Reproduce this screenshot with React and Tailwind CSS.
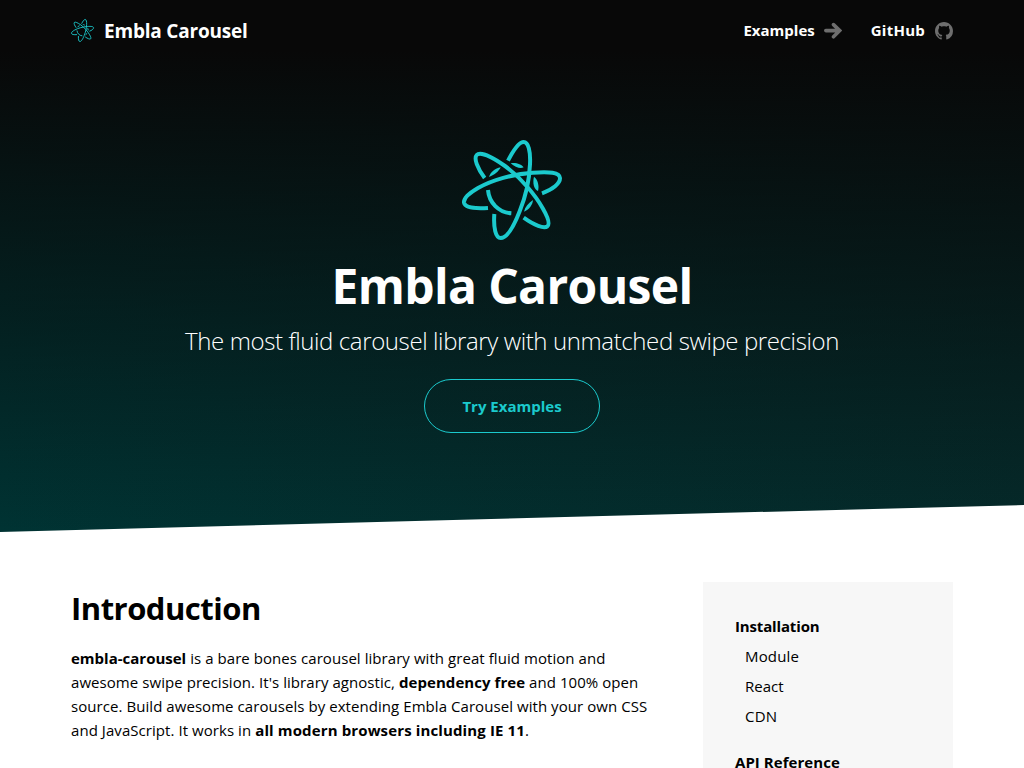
import React from "react";

function EmblaLogo({ className, stroke = 12 }) {
  return (
    <svg className={className} viewBox="30 30 300 300" fill="none" stroke="#1bcacd" strokeWidth={stroke} overflow="visible">
      <path d="M168 92C184 61 200 36 215 36C229 36 236 63 234 103C232 148 222 197 203 244C186 288 165 324 146 324C131 324 124 294 127 252" />
      <path d="M270 190C302 179 325 160 324 144C323 127 292 124 242 128C183 132 120 150 78 174C49 191 34 205 36 218C39 232 67 237 108 234" />
      <path d="M98 144C76 115 65 85 74 75C84 64 117 78 159 108C205 142 249 193 273 236C289 264 294 282 286 289C276 297 247 286 215 263" />
      <path d="M108 180C111 218 140 247 178 250" />
      <g fill="#1bcacd" stroke="none">
        <path d="M111 141C115 127 129 115 146 112C141 124 128 134 111 141Z" />
        <path d="M176 100C189 96 208 102 215 112C206 117 190 113 176 100Z" />
        <path d="M246 140C258 149 262 168 258 183C246 178 241 159 246 140Z" />
        <path d="M243 210C242 225 231 239 216 245C219 231 229 219 243 210Z" />
      </g>
    </svg>
  );
}

function Sidebar() {
  return (
    <aside className="w-[250px] bg-[#f7f7f7] px-8 pt-[29px] text-[15px] leading-[30px]">
      <h3 className="font-bold tracking-[-0.15px]">Installation</h3>
      <ul className="mb-4 pl-2.5">
        <li className="tracking-[0.15px]">Module</li>
        <li>React</li>
        <li className="tracking-[0.2px]">CDN</li>
      </ul>
      <h3 className="font-bold tracking-[0.05px]">API Reference</h3>
    </aside>
  );
}

export default function App() {
  return (
    <div className="flex h-screen flex-col overflow-hidden bg-white font-['Open_Sans','Noto_Sans',sans-serif] text-black">
      <section className="flex h-[532px] shrink-0 flex-col bg-[linear-gradient(#080808_50px,#08080800_532px),linear-gradient(90deg,#003333,#052a2a)] [clip-path:polygon(0_0,100%_0,100%_505px,0_532px)]">
        <header className="flex h-[61px] items-center justify-between px-[71px] text-white">
          <div className="flex items-center gap-2.5">
            <EmblaLogo className="h-[23px] w-[23px]" stroke={12} />
            <span className="pt-0.5 text-[19px] font-bold tracking-[-0.2px]">Embla Carousel</span>
          </div>
          <nav className="flex items-center gap-[29px] text-[15px] font-bold">
            <a className="flex items-center gap-[9px]">
              Examples
              <svg className="h-[18px] w-[18px]" viewBox="0 0 18 18" fill="none" stroke="#6e6e6e" strokeWidth="3.6" strokeLinecap="round">
                <path d="M1.8 8.6H15M9.5 2.6L15.7 8.6L9.5 14.8" />
              </svg>
            </a>
            <a className="flex items-center gap-2.5 tracking-[0.25px]">
              GitHub
              <svg className="h-[18px] w-[18px]" viewBox="0 0 16 16" fill="#6e6e6e">
                <path d="M8 0C3.58 0 0 3.58 0 8c0 3.54 2.29 6.53 5.47 7.59.4.07.55-.17.55-.38 0-.19-.01-.82-.01-1.49-2.01.37-2.53-.49-2.69-.94-.09-.23-.48-.94-.82-1.13-.28-.15-.68-.52-.01-.53.63-.01 1.08.58 1.23.82.72 1.21 1.87.87 2.33.66.07-.52.28-.87.51-1.07-1.78-.2-3.64-.89-3.64-3.95 0-.87.31-1.59.82-2.15-.08-.2-.36-1.02.08-2.12 0 0 .67-.21 2.2.82.64-.18 1.32-.27 2-.27s1.36.09 2 .27c1.53-1.04 2.2-.82 2.2-.82.44 1.1.16 1.92.08 2.12.51.56.82 1.27.82 2.15 0 3.07-1.87 3.75-3.65 3.95.29.25.54.73.54 1.48 0 1.07-.01 1.93-.01 2.2 0 .21.15.46.55.38A8.01 8.01 0 0 0 16 8c0-4.42-3.58-8-8-8Z" />
              </svg>
            </a>
          </nav>
        </header>
        <div className="flex flex-col items-center pt-[79px]">
          <EmblaLogo className="h-[100px] w-[100px]" />
          <h1 className="mt-[15px] text-[48px] leading-[62px] font-bold tracking-[-0.65px] whitespace-nowrap text-white">Embla Carousel</h1>
          <p className="mt-2 text-[24px] leading-[32px] font-light tracking-[-0.39px] whitespace-nowrap text-white">The most fluid carousel library with unmatched swipe precision</p>
          <a className="mt-[22px] flex h-[54px] w-[176px] items-center justify-center rounded-full border border-[#1bcacd] text-[15px] font-bold text-[#1bcacd]">Try Examples</a>
        </div>
      </section>
      <main className="mt-[50px] flex flex-1 justify-between px-[71px]">
        <article>
          <h2 className="text-[31px] leading-[52px] font-bold tracking-[-0.5px]">Introduction</h2>
          <p className="mt-3 text-[15px] leading-6 tracking-[0.06px] whitespace-nowrap">
            <span className="block"><b className="tracking-normal">embla-carousel</b> is a bare bones carousel library with great fluid motion and</span>
            <span className="block">awesome swipe precision. It's library agnostic, <b>dependency free</b> and 100% open</span>
            <span className="block">source. Build awesome carousels by extending Embla Carousel with your own CSS</span>
            <span className="block">and JavaScript. It works in <b className="tracking-[0.13px]">all modern browsers including IE 11</b>.</span>
          </p>
        </article>
        <Sidebar />
      </main>
    </div>
  );
}
